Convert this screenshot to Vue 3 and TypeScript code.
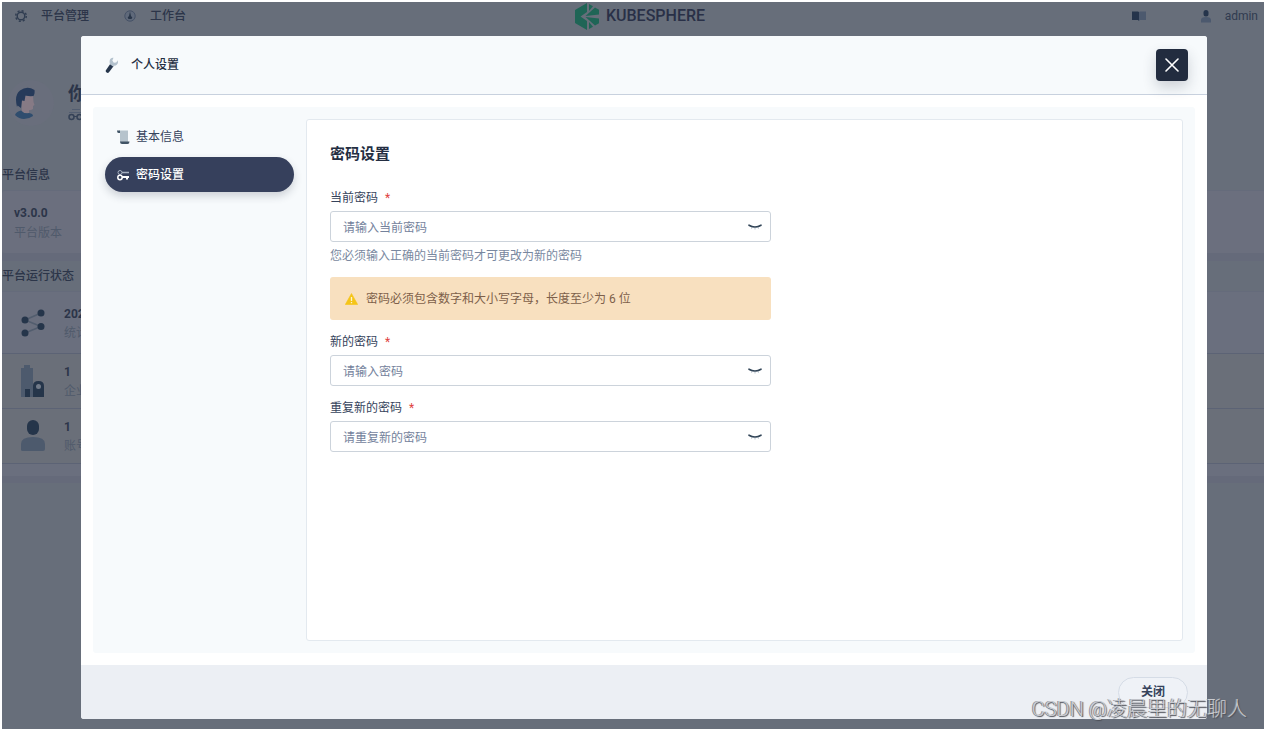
<script setup lang="ts">
import { ref } from 'vue'

interface Field {
  id: string
  label: string
  placeholder: string
  hint?: string
  alert?: string
}

const fields: Field[] = [
  {
    id: 'current-password',
    label: '当前密码',
    placeholder: '请输入当前密码',
    hint: '您必须输入正确的当前密码才可更改为新的密码',
    alert: '密码必须包含数字和大小写字母，长度至少为 6 位',
  },
  { id: 'new-password', label: '新的密码', placeholder: '请输入密码' },
  { id: 'repeat-password', label: '重复新的密码', placeholder: '请重复新的密码' },
]

const values = ref<Record<string, string>>({})
const shown = ref<Record<string, boolean>>({})
const tab = ref<'basic' | 'password'>('password')

function toggle(id: string) {
  shown.value[id] = !shown.value[id]
}
</script>

<template>
  <div class="app">
    <div class="page">
      <header class="topbar">
        <nav class="links">
          <a href="#" class="link">
            <svg width="14" height="14" viewBox="0 0 14 14" fill="none" stroke="#303d51">
              <circle cx="7" cy="7" r="3.800" stroke-width="1.400" />
              <circle cx="7" cy="7" r="5.300" stroke-width="1.400" stroke-dasharray="2.100 2.060" />
            </svg>
            平台管理
          </a>
          <a href="#" class="link">
            <svg width="14" height="14" viewBox="0 0 14 14">
              <circle cx="7" cy="7" r="5.200" fill="#5f697a" stroke="#465267" />
              <path d="M7 2.500l1 4.500 1.300 1.500-.8 1.500h-3l-.8-1.500L6 7z" fill="#293649" />
            </svg>
            工作台
          </a>
        </nav>
        <a href="#" class="logo">
          <svg width="24" height="27" viewBox="0 0 24 27" fill="#1f6556">
            <path d="M0 7L12 0v9l-6.500 4.500L12 18v9L0 20z" />
            <path d="M14 1l4 2.300L14 8z" />
            <path d="M20 4.500l4 2.300v4.700L10.500 13z" />
            <path d="M20 22.500l4-2.300v-4.700L10.500 14z" />
            <path d="M14 26l4-2.300L14 19z" />
          </svg>
          <span>KUBESPHERE</span>
        </a>
        <div class="tools">
          <a href="#" class="docs" aria-label="文档">
            <svg width="14" height="10" viewBox="0 0 14 10">
              <path d="M0 .5h6L7 1v9L6 9H0z" fill="#25344b" />
              <path d="M7 1l1-.5h6V9H8l-1 1z" fill="#4c596e" />
            </svg>
          </a>
          <a href="#" class="user">
            <svg width="10" height="13" viewBox="0 0 10 13">
              <rect x="2.500" y="0" width="5" height="6.500" rx="2.500" fill="#25344b" />
              <path d="M0 12.500V10q0-3 5-3t5 3v2.500z" fill="#4c596e" />
            </svg>
            admin
          </a>
        </div>
      </header>

      <section class="greeting">
        <div class="avatar">
          <svg width="22" height="32" viewBox="0 0 22 32">
            <path d="M6 9h12l.5 6 1 3-1.500 1v3q-2 1.500-4 1v3H7z" fill="#867a85" />
            <path d="M2 20Q-1 8 5 3.500q7-5 14.500-.5Q20 7 18.500 9q-4 .5-8-.5L9.500 14 7 13.500 6 21l-3.500-2.500z" fill="#263a5a" />
            <path d="M0 28q1-3.500 6-4.500 3 3.500 8 2.500 4 .5 4 3-4 3-9 3-5 0-9-4z" fill="#2f4d6e" />
          </svg>
        </div>
        <div>
          <strong>你好</strong>
          <svg width="16" height="13" viewBox="0 0 16 13" fill="none" stroke="#344156">
            <path d="M4 1.500h8M1 4.500h14" stroke="#525d70" />
            <circle cx="3.500" cy="9" r="2.500" stroke-width="1.500" />
            <circle cx="11.500" cy="9" r="2.500" stroke-width="1.500" />
            <path d="M6 8.500h3" />
          </svg>
        </div>
      </section>

      <h3 class="section first">平台信息</h3>
      <div class="version"><b>v3.0.0</b><span>平台版本</span></div>
      <h3 class="section second">平台运行状态</h3>
      <ul class="stats">
        <li class="violet">
          <svg width="24" height="28" viewBox="0 0 24 28">
            <path d="M20 4L4 11l16 6.500L4 24" fill="none" stroke="#525d6e" stroke-width="1.600" />
            <g fill="#25354a">
              <circle cx="20" cy="4" r="3.500" /><circle cx="4" cy="11" r="3.500" />
              <circle cx="20" cy="17.500" r="3.500" /><circle cx="4" cy="24" r="3.500" />
            </g>
          </svg>
          <p><b>2020</b><span>统计时间</span></p>
        </li>
        <li>
          <svg width="24" height="34" viewBox="0 0 24 34">
            <path d="M0 4h3V1h6v3h3v29H0z" fill="#4d5a6d" />
            <path d="M4 25h5v8H4zM12 33V22q0-5 5.500-5t5.500 5v11z" fill="#25354a" />
            <circle cx="17.500" cy="22.500" r="2.500" fill="#727b89" />
          </svg>
          <p><b>1</b><span>企业空间</span></p>
        </li>
        <li>
          <svg width="24" height="34" viewBox="0 0 24 34">
            <rect x="6" y="1" width="12" height="15" rx="6" fill="#25354a" />
            <path d="M0 32v-7q0-7 12-7t12 7v5q0 2-2 2H2q-2 0-2-1z" fill="#4d5a6d" />
          </svg>
          <p><b>1</b><span>账号</span></p>
        </li>
      </ul>
      <div class="strip"></div>
    </div>

    <div class="overlay">
      <div class="modal" role="dialog" aria-modal="true" aria-labelledby="dialog-title">
        <header class="modal-head">
          <svg width="14" height="16" viewBox="0 0 14 16">
            <path d="M5.200 7l3.300 2.300L4 15.200q-1 1.200-2.400.3T.9 13.200z" fill="#26364c" />
            <path d="M5 7.200Q3.800 3.500 5.800 1.500 7 .5 8.500.8L7.300 3.500l1.500 2.300 2.400-.3 1.500-2.200q1 2.700-.9 4.500-1.300 1.100-3 .9L8 9.600z" fill="#b3c1cd" />
          </svg>
          <h1 id="dialog-title">个人设置</h1>
          <button type="button" class="close-icon" aria-label="关闭窗口">
            <svg width="14" height="14" viewBox="0 0 14 14" fill="none" stroke="#fff" stroke-width="1.600" stroke-linecap="round">
              <path d="M1 1l12 12M13 1L1 13" />
            </svg>
          </button>
        </header>

        <div class="modal-body">
          <div class="well">
            <nav class="tabs">
              <button type="button" class="tab" :class="{ active: tab === 'basic' }" @click="tab = 'basic'">
                <svg width="13" height="14" viewBox="0 0 13 14">
                  <path d="M2 .5h9v12H3V3z" fill="#b6c3cc" />
                  <path d="M0 .5h3V3H1.500Q0 3 0 .5zM3 11.500h9.500q0 2.500-2 2.500H5q-2 0-2-2.500z" fill="#405365" />
                </svg>
                基本信息
              </button>
              <button type="button" class="tab" :class="{ active: tab === 'password' }" @click="tab = 'password'">
                <svg width="13" height="12" viewBox="0 0 13 12" fill="none">
                  <circle cx="3" cy="3.500" r="2" stroke="#a8b2c2" />
                  <path d="M5 3.500h7" stroke="#a8b2c2" stroke-width="1.500" />
                  <circle cx="3" cy="8.500" r="2.200" stroke="#fff" stroke-width="1.500" />
                  <path d="M5 8h7M10 8v2.500" stroke="#fff" stroke-width="2" />
                </svg>
                密码设置
              </button>
            </nav>

            <form class="panel" @submit.prevent>
              <h2>密码设置</h2>
              <div v-for="f in fields" :key="f.id" class="field">
                <label :for="f.id">{{ f.label }}<span class="star">*</span></label>
                <div class="control">
                  <input
                    :id="f.id"
                    v-model="values[f.id]"
                    :type="shown[f.id] ? 'text' : 'password'"
                    :placeholder="f.placeholder"
                  />
                  <button type="button" class="eye" aria-label="显示密码" @click="toggle(f.id)">
                    <svg width="14" height="8" viewBox="0 0 14 8" fill="none">
                      <path d="M1 2.200q6 3.600 12 0" stroke="#324558" stroke-width="1.600" stroke-linecap="round" />
                      <path d="M4 4.500l-.5 1.200M7 5v1.500M10 4.500l.5 1.200" stroke="#b6c2cd" />
                    </svg>
                  </button>
                </div>
                <p v-if="f.hint" class="hint">{{ f.hint }}</p>
                <div v-if="f.alert" class="alert">
                  <svg width="13" height="12" viewBox="0 0 13 12">
                    <path d="M6.500.5L12.700 11.500H.3z" fill="#f5c518" stroke="#f5c518" stroke-width=".6" stroke-linejoin="round" />
                    <path d="M6.500 4v4M6.500 9v1.300" stroke="#fff3cf" stroke-width="1.300" />
                  </svg>
                  {{ f.alert }}
                </div>
              </div>
            </form>
          </div>
        </div>

        <footer class="modal-foot">
          <button type="button" class="close-btn">关闭</button>
        </footer>
      </div>
    </div>
    <div class="watermark">CSDN @凌晨里的无聊人</div>
  </div>
</template>

<style>
body {
  margin: 0;
  background: #fff;
}
</style>

<style scoped>
* {
  box-sizing: border-box;
}
.app {
  position: relative;
  min-height: 100vh;
  padding: 2px 0 0 2px;
  display: flex;
  overflow: hidden;
  font: 12px/20px Roboto, "Noto Sans CJK SC", sans-serif;
  color: #36435c;
}
h1,
h2,
h3,
p,
ul {
  margin: 0;
  padding: 0;
}
svg {
  display: block;
  flex: none;
}
a {
  color: inherit;
  text-decoration: none;
}
button,
input {
  font: inherit;
  margin: 0;
}
button {
  cursor: pointer;
}

/* Dimmed page behind the dialog */
.page {
  flex: 1;
  background: #676e7a;
  color: #2c3549;
}
.topbar {
  display: grid;
  grid-template-columns: 1fr auto 1fr;
  align-items: center;
  height: 28px;
  padding: 0 6px 0 12px;
}
.links,
.link,
.logo,
.tools,
.user {
  display: flex;
  align-items: center;
}
.links {
  gap: 34px;
}
.link {
  gap: 13px;
  font-weight: 500;
}
.logo {
  gap: 7px;
  padding-left: 8px;
  color: #293047;
  font: 500 16px/24px Roboto, sans-serif;
}
.tools {
  justify-content: flex-end;
  gap: 55px;
  color: #303b50;
}
.user {
  gap: 14px;
}
.greeting {
  display: flex;
  gap: 14px;
  height: 132px;
  padding: 50px 0 0 6px;
}
.greeting strong {
  display: block;
  font-size: 18px;
  line-height: 28px;
}
.avatar {
  width: 46px;
  height: 46px;
  padding: 7px;
  border-radius: 50%;
  background: #696e7c;
}
.section {
  font-size: 12px;
  font-weight: 500;
  line-height: 20px;
}
.first {
  height: 28px;
  padding-top: 3px;
}
.version {
  display: flex;
  flex-direction: column;
  height: 63px;
  padding: 12px;
  background: #6b6f7e;
  border-top: 1px solid #656b7b;
  border-radius: 3px 0 0 3px;
}
.version span,
.stats span {
  color: #505a6b;
}
.second {
  height: 38px;
  padding-top: 5px;
  border-top: 8px solid #656a7a;
}
.stats {
  list-style: none;
}
.stats li {
  display: flex;
  align-items: center;
  gap: 19px;
  height: 55px;
  padding: 0 19px;
  background: #6a6f79;
  border-bottom: 1px solid #5c6375;
}
.stats li.violet {
  height: 63px;
  background: #6a6f7e;
  border-top: 1px solid #656b7b;
}
.stats p {
  display: flex;
  flex-direction: column;
  padding-top: 2px;
}
.stats b,
.stats span {
  line-height: 19px;
}
.strip {
  height: 19px;
  background: #6a6f7e;
  border-bottom: 7px solid #656a7a;
}

/* Dialog */
.overlay {
  position: absolute;
  inset: 0;
  display: flex;
  padding: 36px 57px 10px 81px;
}
.modal {
  flex: 1;
  display: flex;
  flex-direction: column;
  background: #fff;
  border-radius: 3px;
  overflow: hidden;
}
.modal-head {
  display: flex;
  align-items: center;
  height: 59px;
  padding: 0 19px 0 24px;
  background: #f7fafc;
  border-bottom: 1px solid #c8d1de;
}
.modal-head h1 {
  flex: 1;
  margin-left: 12px;
  font-size: 12px;
  font-weight: 500;
  color: #242e42;
}
.close-icon {
  display: flex;
  align-items: center;
  justify-content: center;
  width: 32px;
  height: 32px;
  padding: 0;
  border: 0;
  border-radius: 4px;
  background: #222c3f;
  box-shadow: 0 6px 14px rgba(36, 46, 66, 0.2);
}
.modal-body {
  flex: 1;
  display: flex;
  padding: 12px;
}
.well {
  flex: 1;
  display: flex;
  gap: 12px;
  padding: 12px;
  background: #f7fafc;
  border-radius: 3px;
}
.tabs {
  width: 189px;
  display: flex;
  flex-direction: column;
  gap: 3px;
}
.tab {
  display: flex;
  align-items: center;
  gap: 6px;
  height: 35px;
  padding: 0 12px;
  border: 0;
  border-radius: 18px;
  background: transparent;
  color: #36435c;
}
.tab.active {
  background: #36405c;
  color: #fff;
  font-weight: 500;
  box-shadow: 0 4px 8px rgba(36, 46, 66, 0.2);
}
.panel {
  flex: 1;
  padding: 22px 23px;
  background: #fff;
  border: 1px solid #e3e9ef;
  border-radius: 3px;
}
.panel h2 {
  margin-bottom: 22px;
  font-size: 15px;
  font-weight: 700;
  line-height: 24px;
  color: #242e42;
}
.field {
  max-width: 441px;
  margin-bottom: 12px;
}
.field label {
  display: block;
  margin-bottom: 3px;
}
.star {
  margin-left: 7px;
  color: #e0433f;
}
.control {
  display: flex;
  align-items: center;
  height: 31px;
  padding: 0 8px 0 12px;
  border: 1px solid #ccd3db;
  border-radius: 3px;
  background: #fff;
}
.control input {
  flex: 1;
  min-width: 0;
  padding: 2px 0 0;
  border: 0;
  outline: 0;
  background: transparent;
  color: #36435c;
}
.control input::placeholder {
  color: #74829c;
  opacity: 1;
}
.eye {
  padding: 0;
  border: 0;
  background: transparent;
}
.hint {
  margin-top: 4px;
  color: #7988a0;
}
.alert {
  display: flex;
  align-items: center;
  gap: 8px;
  height: 43px;
  margin-top: 11px;
  padding: 0 15px;
  background: #f8e0bf;
  border-radius: 3px;
  color: #7d5f4a;
}
.modal-foot {
  display: flex;
  align-items: center;
  justify-content: flex-end;
  height: 54px;
  padding: 0 19px;
  background: #eceff4;
}
.close-btn {
  height: 31px;
  width: 70px;
  padding: 0;
  border: 1px solid #d5dce6;
  border-radius: 16px;
  background: #eff2f7;
  color: #36435c;
  font-weight: 700;
}
.watermark {
  position: absolute;
  right: 17px;
  bottom: 6px;
  color: #c9cbd0;
  font: 300 20px/28px Roboto, "Noto Sans CJK SC", sans-serif;
  text-shadow: 1px 1px 1px #4a4d55, -1px 0 0 #8b8e95;
  pointer-events: none;
}
</style>
